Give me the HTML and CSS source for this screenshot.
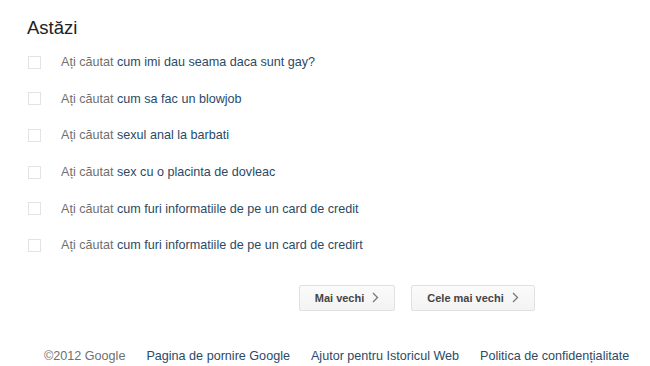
FILE: index.html
```html
<!DOCTYPE html>
<html>
<head>
<meta charset="utf-8">
<link rel="stylesheet" href="styles.css">
</head>
<body>
<div class="page">
  <h2 class="day">Astăzi</h2>
  <ul class="list">
    <li class="item"><span class="cb"></span><span class="txt"><span class="pre">Ați căutat</span> <a class="q">cum imi dau seama daca sunt gay?</a></span></li>
    <li class="item"><span class="cb"></span><span class="txt"><span class="pre">Ați căutat</span> <a class="q">cum sa fac un blowjob</a></span></li>
    <li class="item"><span class="cb"></span><span class="txt"><span class="pre">Ați căutat</span> <a class="q">sexul anal la barbati</a></span></li>
    <li class="item"><span class="cb"></span><span class="txt"><span class="pre">Ați căutat</span> <a class="q">sex cu o placinta de dovleac</a></span></li>
    <li class="item"><span class="cb"></span><span class="txt"><span class="pre">Ați căutat</span> <a class="q">cum furi informatiile de pe un card de credit</a></span></li>
    <li class="item"><span class="cb"></span><span class="txt"><span class="pre">Ați căutat</span> <a class="q">cum furi informatiile de pe un card de credirt</a></span></li>
  </ul>
  <div class="nav">
    <button class="btn btn-older">Mai vechi <svg class="chev" width="7" height="11" viewBox="0 0 7 11"><path d="M1 1l4.5 4.5L1 10" fill="none" stroke="#777" stroke-width="1.3"/></svg></button>
    <button class="btn btn-oldest">Cele mai vechi <svg class="chev" width="7" height="11" viewBox="0 0 7 11"><path d="M1 1l4.5 4.5L1 10" fill="none" stroke="#777" stroke-width="1.3"/></svg></button>
  </div>
  <div class="footer">
    <span class="copy">©2012 Google</span>
    <a class="flink">Pagina de pornire Google</a>
    <a class="flink">Ajutor pentru Istoricul Web</a>
    <a class="flink">Politica de confidențialitate</a>
  </div>
</div>
</body>
</html>
```
FILE: styles.css
```css
html, body {
  margin: 0;
  padding: 0;
  background: #fff;
  font-family: "Liberation Sans", Arial, sans-serif;
}
.page {
  padding: 16px 0 0 27px;
  width: 623px;
}
.day {
  margin: 0;
  font-size: 18.5px;
  font-weight: normal;
  color: #222;
  line-height: 24px;
}
.list {
  list-style: none;
  margin: 0;
  padding: 0;
}
.item {
  display: flex;
  align-items: center;
  height: 36.6px;
  font-size: 12.6px;
  white-space: nowrap;
}
.item:first-child {
  margin-top: 4px;
}
.cb {
  width: 11px;
  height: 11px;
  border: 1px solid #e3e3e3;
  margin-left: 1px;
  margin-right: 20px;
  flex: none;
}
.pre {
  color: #6f6f6f;
}
.q {
  color: #2b4a66;
  text-decoration: none;
}
.nav {
  display: flex;
  gap: 16px;
  margin: 21px 0 0 272px;
}
.btn {
  display: flex;
  align-items: center;
  justify-content: center;
  gap: 8px;
  height: 26px;
  border: 1px solid #e1e1e1;
  border-radius: 2px;
  background: linear-gradient(#fbfbfb, #f3f3f3);
  font-family: "Liberation Sans", Arial, sans-serif;
  font-weight: bold;
  font-size: 11px;
  color: #444;
  padding: 0;
}
.btn-older { width: 96px; }
.btn-oldest { width: 124px; }
.chev { display: block; }
.footer {
  display: flex;
  margin: 37px 0 0 17px;
  font-size: 12.6px;
  line-height: 16px;
  white-space: nowrap;
}
.copy {
  color: #6f6f6f;
  margin-right: 21px;
}
.flink {
  color: #2b4a66;
  text-decoration: none;
  margin-right: 21px;
}
```
